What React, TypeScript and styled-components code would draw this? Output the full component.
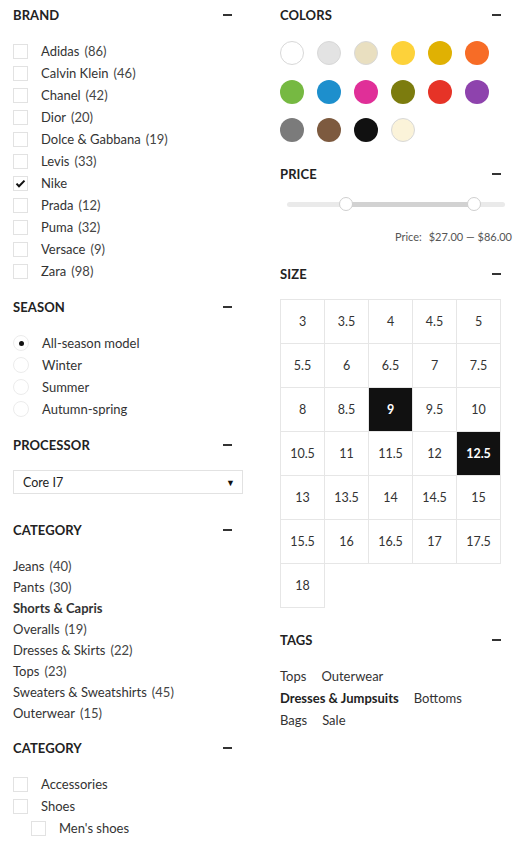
import React from "react";
import styled, { createGlobalStyle } from "styled-components";

const Global = createGlobalStyle`
  html, body { margin: 0; padding: 0; background: #fff; }
  body { font-family: Lato, "Noto Sans", sans-serif; color: #333; font-size: 13px; }
  * { box-sizing: border-box; }
`;

const Page = styled.div`
  display: grid;
  grid-template-columns: 230px 232px;
  column-gap: 37px;
  padding: 5px 0 0 13px;
  width: 525px;
`;

const Column = styled.div`
  display: flex;
  flex-direction: column;
`;

const Section = styled.section<{ $after?: number }>`
  display: flex;
  flex-direction: column;
  margin-bottom: ${(p) => p.$after ?? 15}px;
`;

const TitleRow = styled.div`
  display: flex;
  align-items: center;
  justify-content: space-between;
  height: 20px;
  margin-bottom: 15px;
  padding-right: 11px;
`;

const Title = styled.h3`
  margin: 0;
  font-size: 13px;
  font-weight: 700;
  color: #222;
  letter-spacing: 0.1px;
`;

const Minus = styled.span`
  display: block;
  width: 9px;
  height: 1.5px;
  background: #333;
`;

const List = styled.ul<{ $row?: number }>`
  list-style: none;
  margin: 0;
  padding: 0;
  display: flex;
  flex-direction: column;
  & > li {
    height: ${(p) => p.$row ?? 22}px;
    display: flex;
    align-items: center;
  }
`;

const CheckRow = styled.li<{ $indent?: number }>`
  padding-left: ${(p) => p.$indent ?? 0}px;
  gap: 13px;
`;

const Box = styled.span`
  width: 15px;
  height: 15px;
  border: 1px solid #e2e2e2;
  display: inline-flex;
  align-items: center;
  justify-content: center;
  flex: none;
`;

const Radio = styled.span`
  width: 16px;
  height: 16px;
  border: 1px solid #ececec;
  border-radius: 50%;
  display: inline-flex;
  align-items: center;
  justify-content: center;
  flex: none;
  & > i {
    width: 5px;
    height: 5px;
    background: #111;
    border-radius: 50%;
  }
`;

const Label = styled.span<{ $bold?: boolean }>`
  color: #333;
  font-weight: ${(p) => (p.$bold ? 700 : 400)};
`;

const Count = styled.span`
  margin-left: 5px;
  color: #444;
`;

const Select = styled.div`
  height: 24px;
  border: 1px solid #e2e2e2;
  display: flex;
  align-items: center;
  justify-content: space-between;
  padding: 0 7px 0 9px;
  margin-bottom: 11px;
  color: #222;
  font-size: 12.5px;
`;

const Arrow = styled.span`
  font-size: 9px;
  color: #111;
`;

const Swatches = styled.div`
  display: grid;
  grid-template-columns: repeat(6, 24px);
  column-gap: 13px;
  row-gap: 14.5px;
  padding-top: 1px;
`;

const Swatch = styled.span<{ $c: string; $border?: boolean }>`
  width: 24px;
  height: 24px;
  border-radius: 50%;
  background: ${(p) => p.$c};
  border: ${(p) => (p.$border ? "1px solid #d8d8d8" : "none")};
`;

const SliderWrap = styled.div`
  height: 10px;
  margin: 0 7px 0 7px;
  display: flex;
  align-items: center;
`;

const Track = styled.div`
  position: relative;
  width: 100%;
  height: 5px;
  border-radius: 3px;
  background: #eaeaea;
`;

const Range = styled.div`
  position: absolute;
  top: 0;
  bottom: 0;
  background: #d2d2d2;
`;

const Handle = styled.span`
  position: absolute;
  top: 50%;
  width: 14px;
  height: 14px;
  margin: -7px 0 0 -7px;
  border-radius: 50%;
  background: #fff;
  border: 1px solid #cfcfcf;
`;

const PriceText = styled.div`
  text-align: right;
  font-size: 11px;
  color: #555;
  line-height: 20px;
  margin-top: 18px;
  & > b { font-weight: 400; margin-left: 4px; }
`;

const SizeGrid = styled.div`
  display: grid;
  grid-template-columns: repeat(5, 44px);
  border-top: 1px solid #e6e6e6;
  border-left: 1px solid #e6e6e6;
  width: max-content;
`;

const SizeCell = styled.div<{ $active?: boolean }>`
  width: 44px;
  height: 44px;
  border-right: 1px solid #e6e6e6;
  border-bottom: 1px solid #e6e6e6;
  display: flex;
  align-items: center;
  justify-content: center;
  font-size: 12.5px;
  background: ${(p) => (p.$active ? "#111" : "#fff")};
  color: ${(p) => (p.$active ? "#fff" : "#333")};
  font-weight: ${(p) => (p.$active ? 700 : 400)};
`;

const TagRows = styled.div`
  display: flex;
  flex-direction: column;
`;

const TagRow = styled.div`
  display: flex;
  gap: 15px;
  height: 22px;
  align-items: center;
`;

const Tag = styled.span<{ $bold?: boolean }>`
  font-weight: ${(p) => (p.$bold ? 700 : 400)};
  color: ${(p) => (p.$bold ? "#222" : "#333")};
`;

const Check = () => (
  <svg width="11" height="9" viewBox="0 0 11 9">
    <path d="M1.5 4.6 L4 7.2 L9.5 1.6" fill="none" stroke="#111" strokeWidth="2" />
  </svg>
);

const Head = ({ title }: { title: string }) => (
  <TitleRow>
    <Title>{title}</Title>
    <Minus />
  </TitleRow>
);

const brands: [string, number | null][] = [
  ["Adidas", 86],
  ["Calvin Klein", 46],
  ["Chanel", 42],
  ["Dior", 20],
  ["Dolce & Gabbana", 19],
  ["Levis", 33],
  ["Nike", null],
  ["Prada", 12],
  ["Puma", 32],
  ["Versace", 9],
  ["Zara", 98],
];

const seasons = ["All-season model", "Winter", "Summer", "Autumn-spring"];

const categories: [string, number | null][] = [
  ["Jeans", 40],
  ["Pants", 30],
  ["Shorts & Capris", null],
  ["Overalls", 19],
  ["Dresses & Skirts", 22],
  ["Tops", 23],
  ["Sweaters & Sweatshirts", 45],
  ["Outerwear", 15],
];

const colors: [string, boolean?][] = [
  ["#ffffff", true],
  ["#e3e3e3", true],
  ["#e9dfc0", true],
  ["#fdd23a"],
  ["#e0b103"],
  ["#f76c26"],
  ["#76b942"],
  ["#1d8fcd"],
  ["#e02f98"],
  ["#7c7c0e"],
  ["#e63327"],
  ["#8e43ad"],
  ["#7b7b7b"],
  ["#7d5a3f"],
  ["#111111"],
  ["#fbf3d9", true],
];

const sizes = [
  "3", "3.5", "4", "4.5", "5",
  "5.5", "6", "6.5", "7", "7.5",
  "8", "8.5", "9", "9.5", "10",
  "10.5", "11", "11.5", "12", "12.5",
  "13", "13.5", "14", "14.5", "15",
  "15.5", "16", "16.5", "17", "17.5",
  "18",
];
const activeSizes = ["9", "12.5"];

export default function App() {
  return (
    <>
      <Global />
      <Page>
        <Column>
          <Section>
            <Head title="BRAND" />
            <List>
              {brands.map(([name, n]) => (
                <CheckRow key={name}>
                  <Box>{n === null && <Check />}</Box>
                  <Label>
                    {name}
                    {n !== null && <Count>({n})</Count>}
                  </Label>
                </CheckRow>
              ))}
            </List>
          </Section>
          <Section>
            <Head title="SEASON" />
            <List>
              {seasons.map((s, i) => (
                <CheckRow key={s}>
                  <Radio>{i === 0 && <i />}</Radio>
                  <Label>{s}</Label>
                </CheckRow>
              ))}
            </List>
          </Section>
          <Section>
            <Head title="PROCESSOR" />
            <Select>
              <span>Core I7</span>
              <Arrow>▼</Arrow>
            </Select>
          </Section>
          <Section>
            <Head title="CATEGORY" />
            <List $row={21}>
              {categories.map(([name, n]) => (
                <li key={name}>
                  <Label $bold={n === null}>
                    {name}
                    {n !== null && <Count>({n})</Count>}
                  </Label>
                </li>
              ))}
            </List>
          </Section>
          <Section>
            <Head title="CATEGORY" />
            <List>
              <CheckRow>
                <Box />
                <Label>Accessories</Label>
              </CheckRow>
              <CheckRow>
                <Box />
                <Label>Shoes</Label>
              </CheckRow>
              <CheckRow $indent={18}>
                <Box />
                <Label>Men's shoes</Label>
              </CheckRow>
            </List>
          </Section>
        </Column>
        <Column>
          <Section $after={22}>
            <Head title="COLORS" />
            <Swatches>
              {colors.map(([c, b], i) => (
                <Swatch key={i} $c={c} $border={b} />
              ))}
            </Swatches>
          </Section>
          <Section $after={17}>
            <Head title="PRICE" />
            <SliderWrap>
              <Track>
                <Range style={{ left: "27%", right: "14%" }} />
                <Handle style={{ left: "27%" }} />
                <Handle style={{ left: "86%" }} />
              </Track>
            </SliderWrap>
            <PriceText>
              Price: <b>$27.00 — $86.00</b>
            </PriceText>
          </Section>
          <Section $after={22}>
            <Head title="SIZE" />
            <SizeGrid>
              {sizes.map((s) => (
                <SizeCell key={s} $active={activeSizes.includes(s)}>
                  {s}
                </SizeCell>
              ))}
            </SizeGrid>
          </Section>
          <Section>
            <Head title="TAGS" />
            <TagRows>
              <TagRow>
                <Tag>Tops</Tag>
                <Tag>Outerwear</Tag>
              </TagRow>
              <TagRow>
                <Tag $bold>Dresses & Jumpsuits</Tag>
                <Tag>Bottoms</Tag>
              </TagRow>
              <TagRow>
                <Tag>Bags</Tag>
                <Tag>Sale</Tag>
              </TagRow>
            </TagRows>
          </Section>
        </Column>
      </Page>
    </>
  );
}
